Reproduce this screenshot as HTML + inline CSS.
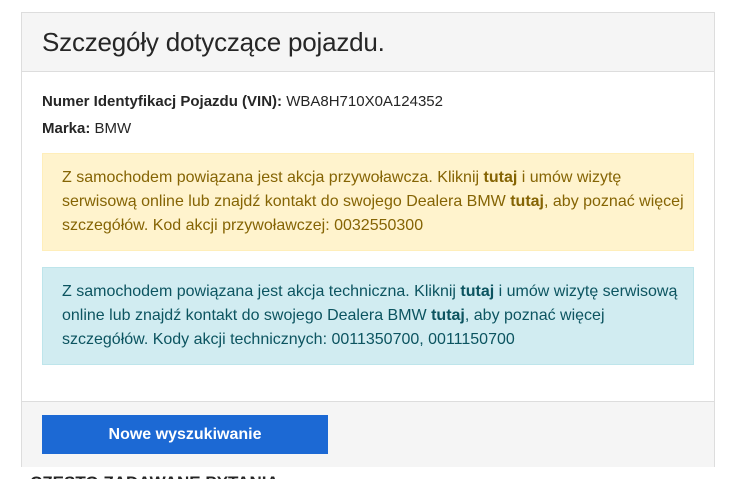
<!DOCTYPE html>
<html style="width:741px;height:479px;overflow:hidden"><head><meta charset="utf-8"><style>
body{margin:0;background:#fff;width:741px;height:479px;overflow:hidden;font-family:"Liberation Sans",sans-serif;color:#262626;position:relative}
.card{position:absolute;left:21px;top:12px;width:692px;height:453px;border:1px solid #ddd;background:#fff}
.hd{height:58px;background:#f5f5f5;border-bottom:1px solid #ddd;position:relative}
.hd h1{position:absolute;left:20px;top:14px;margin:0;font-weight:normal;font-size:26px;color:#262626;letter-spacing:-0.2px}
.row{position:absolute;left:20px;font-size:15px;white-space:nowrap}
.alert{position:absolute;left:20px;width:652px;border:1px solid;font-size:16px;line-height:24px;padding:12px 19px;box-sizing:border-box;white-space:nowrap}
.w{top:140px;height:98px;background:#fff3cd;border-color:#ffeeba;color:#856404}
.i{top:254px;height:98px;background:#d1ecf1;border-color:#bee5eb;color:#0c5460}
.ft{position:absolute;left:0;top:388px;width:692px;height:65px;background:#f5f5f5;border-top:1px solid #ddd}
.btn{position:absolute;left:20px;top:13px;width:286px;height:39px;background:#1c69d4;color:#fff;font-weight:bold;font-size:16px;text-align:center;line-height:39px}
.clip{position:absolute;left:0;top:0;width:741px;height:479px;overflow:hidden}
.faq{position:absolute;left:30px;top:473px;font-size:17px;font-weight:bold;color:#262626;line-height:20px}
</style></head><body>
<div class="clip">
<div class="card">
<div class="hd"><h1>Szczegóły dotyczące pojazdu.</h1></div>
<div class="row" style="top:80px"><b>Numer Identyfikacj Pojazdu (VIN):</b> WBA8H710X0A124352</div>
<div class="row" style="top:107px"><b>Marka:</b> BMW</div>
<div class="alert w">Z samochodem powiązana jest akcja przywoławcza. Kliknij <b>tutaj</b> i umów wizytę<br>serwisową online lub znajdź kontakt do swojego Dealera BMW <b>tutaj</b>, aby poznać więcej<br>szczegółów. Kod akcji przywoławczej: 0032550300</div>
<div class="alert i">Z samochodem powiązana jest akcja techniczna. Kliknij <b>tutaj</b> i umów wizytę serwisową<br>online lub znajdź kontakt do swojego Dealera BMW <b>tutaj</b>, aby poznać więcej<br>szczegółów. Kody akcji technicznych: 0011350700, 0011150700</div>
<div class="ft"><div class="btn">Nowe wyszukiwanie</div></div>
</div>
<div class="faq">CZĘSTO ZADAWANE PYTANIA</div>
</div>
</body></html>
